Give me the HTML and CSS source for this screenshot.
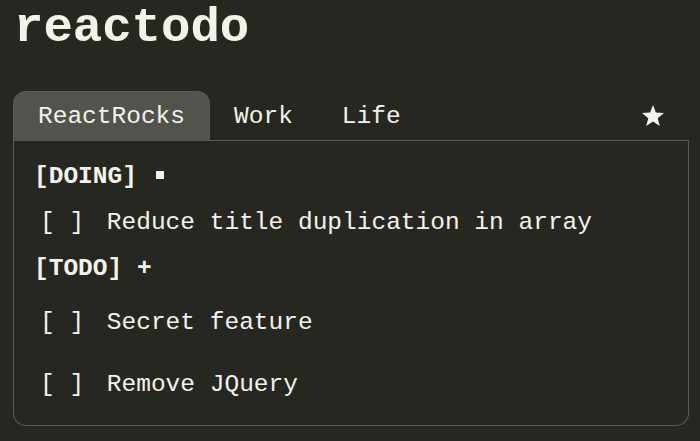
FILE: index.html
```html
<!DOCTYPE html>
<html>
<head>
<meta charset="utf-8">
<link rel="stylesheet" href="styles.css">
</head>
<body>
<h1 class="title">reactodo</h1>
<div class="board">
  <div class="tabs">
    <div class="tab tab--active">ReactRocks</div>
    <div class="tab">Work</div>
    <div class="tab">Life</div>
    <div class="star">
      <svg width="24" height="24" viewBox="0 0 24 24"><polygon points="12,1 14.9,8.6 23,9.1 16.7,14.2 18.8,22 12,17.6 5.2,22 7.3,14.2 1,9.1 9.1,8.6" fill="#f5f5ee"/></svg>
    </div>
  </div>
  <div class="panel">
    <div class="section-title">[DOING] <span class="square"></span></div>
    <ul class="list list--doing">
      <li class="item"><span class="check">[ ]</span> Reduce title duplication in array</li>
    </ul>
    <div class="section-title section-title--todo">[TODO] +</div>
    <ul class="list list--todo">
      <li class="item"><span class="check">[ ]</span> Secret feature</li>
      <li class="item"><span class="check">[ ]</span> Remove JQuery</li>
    </ul>
  </div>
</div>
</body>
</html>
```

FILE: styles.css
```css
html, body {
  margin: 0;
  padding: 0;
  background: #272722;
  color: #f3f3ea;
  font-family: "Courier New", "Liberation Mono", monospace;
}

.title {
  margin: 0 0 35px 0;
  padding: 0 14px;
  font-size: 49px;
  line-height: 56px;
  font-weight: bold;
}

.board {
  margin: 0 11px 0 14px;
}

.tabs {
  display: flex;
  align-items: flex-start;
  border-bottom: 1px solid #5b5b55;
  height: 49px;
}

.tab {
  font-size: 24.5px;
  line-height: 49px;
  padding: 0 24px;
  border: 1px solid transparent;
  border-bottom: none;
  border-radius: 13px 13px 0 0;
  margin-left: -1px;
}

.tab--active {
  background: #53534d;
  border-color: #5b5b55;
}

.star {
  margin-left: auto;
  margin-right: 24px;
  display: flex;
  align-items: center;
  height: 49px;
}

.star svg {
  display: block;
}

.panel {
  border: 1px solid #5b5b55;
  border-top: none;
  border-radius: 0 0 13px 13px;
  margin-left: -1px;
  padding: 21px 0 25px 20px;
  font-size: 24.5px;
  line-height: 30px;
}

.section-title {
  font-weight: bold;
}

.section-title--todo {
  margin-top: 16px;
}

.square {
  display: inline-block;
  width: 8px;
  height: 8px;
  background: #f3f3ea;
  vertical-align: 4px;
  margin-left: 4px;
}

.list {
  list-style: none;
  margin: 0;
  padding: 0 0 0 6px;
  display: flex;
  flex-direction: column;
}

.list--doing {
  margin-top: 16px;
}

.list--todo {
  margin-top: 24px;
  gap: 32px;
}

.check {
  margin-right: 8px;
}
```
